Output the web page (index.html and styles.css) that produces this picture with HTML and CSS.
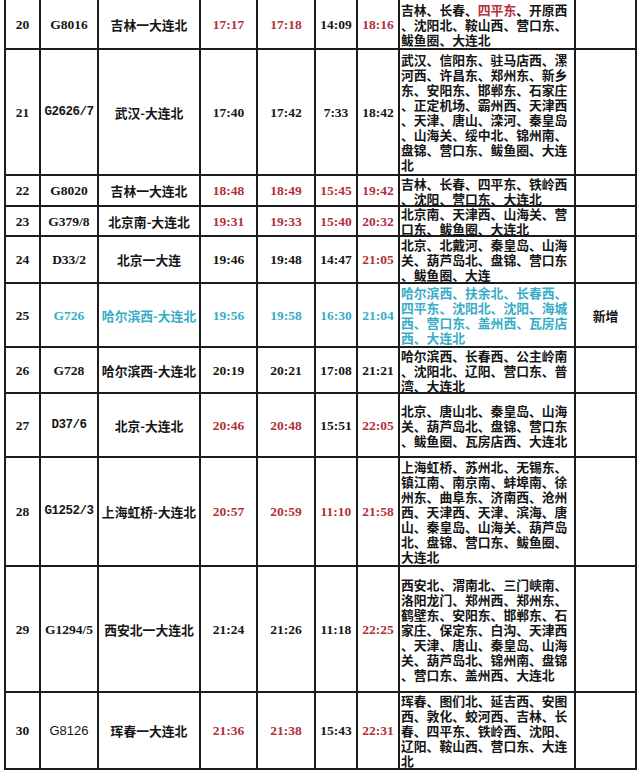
FILE: index.html
```html
<!DOCTYPE html>
<html lang="zh-CN">
<head>
<meta charset="utf-8">
<link rel="stylesheet" href="styles.css">
</head>
<body>
<div class="tt">
<div class="num">20</div><div class="num">G8016</div><div class="cn">吉林一大连北</div>
<div class="num red">17:17</div><div class="num red">17:18</div><div class="num">14:09</div><div class="num red">18:16</div>
<div class="st"><p>吉林、长春、<span class="red">四平东</span>、开原西<br>、沈阳北、鞍山西、营口东、<br>鲅鱼圈、大连北</p></div><div class="cn"></div>

<div class="num">21</div><div class="mono">G2626/7</div><div class="cn">武汉-大连北</div>
<div class="num">17:40</div><div class="num">17:42</div><div class="num">7:33</div><div class="num">18:42</div>
<div class="st"><p>武汉、信阳东、驻马店西、漯<br>河西、许昌东、郑州东、新乡<br>东、安阳东、邯郸东、石家庄<br>、正定机场、霸州西、天津西<br>、天津、唐山、滦河、秦皇岛<br>、山海关、绥中北、锦州南、<br>盘锦、营口东、鲅鱼圈、大连<br>北</p></div><div class="cn"></div>

<div class="num">22</div><div class="num">G8020</div><div class="cn">吉林一大连北</div>
<div class="num red">18:48</div><div class="num red">18:49</div><div class="num red">15:45</div><div class="num red">19:42</div>
<div class="st"><p>吉林、长春、四平东、铁岭西<br>、沈阳、营口东、大连北</p></div><div class="cn"></div>

<div class="num">23</div><div class="num">G379/8</div><div class="cn">北京南-大连北</div>
<div class="num red">19:31</div><div class="num red">19:33</div><div class="num red">15:40</div><div class="num red">20:32</div>
<div class="st"><p>北京南、天津西、山海关、营<br>口东、鲅鱼圈、大连北</p></div><div class="cn"></div>

<div class="num">24</div><div class="num">D33/2</div><div class="cn">北京一大连</div>
<div class="num">19:46</div><div class="num">19:48</div><div class="num">14:47</div><div class="num red">21:05</div>
<div class="st"><p>北京、北戴河、秦皇岛、山海<br>关、葫芦岛北、盘锦、营口东<br>、鲅鱼圈、大连</p></div><div class="cn"></div>

<div class="num">25</div><div class="num cyan">G726</div><div class="cn cyan">哈尔滨西-大连北</div>
<div class="num cyan">19:56</div><div class="num cyan">19:58</div><div class="num cyan">16:30</div><div class="num cyan">21:04</div>
<div class="st cyan"><p>哈尔滨西、扶余北、长春西、<br>四平东、沈阳北、沈阳、海城<br>西、营口东、盖州西、瓦房店<br>西、大连北</p></div><div class="cn">新增</div>

<div class="num">26</div><div class="num">G728</div><div class="cn">哈尔滨西-大连北</div>
<div class="num">20:19</div><div class="num">20:21</div><div class="num">17:08</div><div class="num">21:21</div>
<div class="st"><p>哈尔滨西、长春西、公主岭南<br>、沈阳北、辽阳、营口东、普<br>湾、大连北</p></div><div class="cn"></div>

<div class="num">27</div><div class="mono">D37/6</div><div class="cn">北京-大连北</div>
<div class="num red">20:46</div><div class="num red">20:48</div><div class="num">15:51</div><div class="num red">22:05</div>
<div class="st"><p>北京、唐山北、秦皇岛、山海<br>关、葫芦岛北、盘锦、营口东<br>、鲅鱼圈、瓦房店西、大连北</p></div><div class="cn"></div>

<div class="num">28</div><div class="mono">G1252/3</div><div class="cn">上海虹桥-大连北</div>
<div class="num red">20:57</div><div class="num red">20:59</div><div class="num red">11:10</div><div class="num red">21:58</div>
<div class="st"><p>上海虹桥、苏州北、无锡东、<br>镇江南、南京南、蚌埠南、徐<br>州东、曲阜东、济南西、沧州<br>西、天津西、天津、滨海、唐<br>山、秦皇岛、山海关、葫芦岛<br>北、盘锦、营口东、鲅鱼圈、<br>大连北</p></div><div class="cn"></div>

<div class="num">29</div><div class="num">G1294/5</div><div class="cn">西安北一大连北</div>
<div class="num">21:24</div><div class="num">21:26</div><div class="num">11:18</div><div class="num red">22:25</div>
<div class="st"><p>西安北、渭南北、三门峡南、<br>洛阳龙门、郑州西、郑州东、<br>鹤壁东、安阳东、邯郸东、石<br>家庄、保定东、白沟、天津西<br>、天津、唐山、秦皇岛、山海<br>关、葫芦岛北、锦州南、盘锦<br>、营口东、盖州西、大连北</p></div><div class="cn"></div>

<div class="num">30</div><div class="sans">G8126</div><div class="cn">珲春一大连北</div>
<div class="num red">21:36</div><div class="num red">21:38</div><div class="num">15:43</div><div class="num red">22:31</div>
<div class="st"><p>珲春、图们北、延吉西、安图<br>西、敦化、蛟河西、吉林、长<br>春、四平东、铁岭西、沈阳、<br>辽阳、鞍山西、营口东、大连<br>北</p></div><div class="cn"></div>
</div>
</body>
</html>
```
FILE: styles.css
```css
html, body {
  margin: 0;
  padding: 0;
  background: #fff;
}
body {
  width: 640px;
  height: 772px;
  overflow: hidden;
}
.tt {
  display: grid;
  grid-template-columns: 33px 56px 100px 55px 56px 40px 40px 174px 59px;
  grid-template-rows: 48px 124px 29px 28px 45px 62px 44px 62px 107px 124px 75px;
  gap: 2px;
  padding: 2px;
  width: max-content;
  margin: -2px 0 0 4px;
  background: #1c1c1c;
  color: #161616;
  font-family: "Noto Sans CJK SC", sans-serif;
  font-size: 13px;
  line-height: 15px;
}
.tt > div {
  background: #fff;
  display: flex;
  align-items: center;
  justify-content: center;
  white-space: nowrap;
}
.tt .num {
  font-family: "Liberation Serif", serif;
  font-weight: 700;
  font-size: 13.5px;
}
.tt .mono {
  font-family: "Liberation Mono", monospace;
  font-weight: 700;
  font-size: 12.5px;
  letter-spacing: -0.5px;
}
.tt .sans {
  font-family: "Liberation Sans", sans-serif;
  font-size: 13px;
}
.tt .cn {
  font-weight: 700;
  font-size: 12.8px;
}
.tt .st {
  justify-content: flex-start;
  padding-left: 1px;
  font-weight: 700;
  font-size: 12.8px;
}
.st p {
  margin: 0;
}
.red { color: #b3303a; }
.tt .cyan { color: #38adc8; }
```
